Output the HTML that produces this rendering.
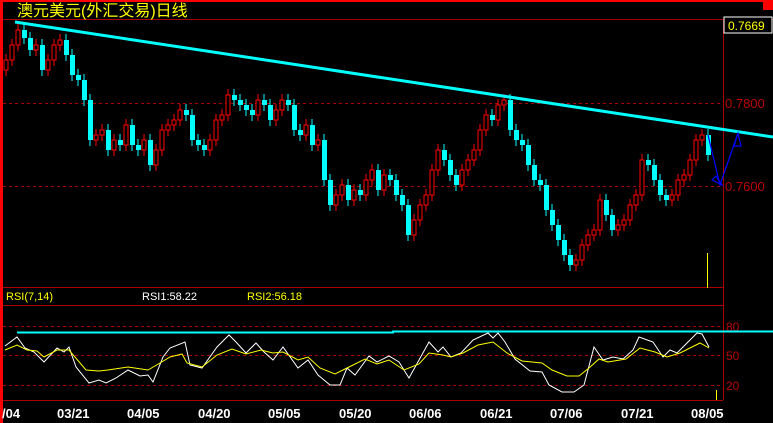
<!DOCTYPE html>
<html><head><meta charset="utf-8"><style>
html,body{margin:0;padding:0;background:#000;width:773px;height:423px;overflow:hidden}
svg{display:block}
text{font-family:"Liberation Sans","Noto Sans CJK SC",sans-serif}
</style></head><body>
<svg width="773" height="423" viewBox="0 0 773 423" shape-rendering="crispEdges">
<rect width="773" height="423" fill="#000"/>
<rect x="0" y="0" width="773" height="2" fill="#f00"/>
<rect x="0" y="0" width="3" height="423" fill="#f00"/>
<rect x="763" y="0" width="10" height="10" fill="#f00"/>
<line x1="3" y1="19.5" x2="773" y2="19.5" stroke="#a00"/>
<line x1="723.5" y1="19" x2="723.5" y2="400" stroke="#a00"/>
<line x1="3" y1="287.5" x2="723" y2="287.5" stroke="#a00"/>
<line x1="3" y1="305.5" x2="723" y2="305.5" stroke="#a00"/>
<line x1="3" y1="400.5" x2="723" y2="400.5" stroke="#a00"/>
<g stroke="#a00" stroke-dasharray="3,3">
<line x1="3" y1="103.5" x2="723" y2="103.5"/>
<line x1="3" y1="186.5" x2="723" y2="186.5"/>
<line x1="3" y1="326.5" x2="723" y2="326.5"/>
<line x1="3" y1="355.5" x2="723" y2="355.5"/>
<line x1="3" y1="385.5" x2="723" y2="385.5"/>
</g>
<text x="17" y="16" font-size="16" fill="#ff0">澳元美元(外汇交易)日线</text>
<rect x="724" y="17" width="48" height="16" fill="#000" stroke="#fff"/>
<text x="728" y="30" font-size="12" fill="#ff0">0.7669</text>
<text x="725" y="108" font-size="13" fill="#b00">0.7800</text>
<text x="725" y="191" font-size="13" fill="#b00">0.7600</text>
<text x="726" y="331" font-size="12" fill="#b00">80</text>
<text x="726" y="360" font-size="12" fill="#b00">50</text>
<text x="726" y="390" font-size="12" fill="#b00">20</text>
<path fill="none" stroke="#0ff" d="M24 24V44 M30 32V56 M42 39V76 M66 34V61 M72 49V81 M78 69V86 M84 74V106 M90 94V146 M108 124V156 M120 134V151 M132 119V151 M138 139V156 M150 134V171 M186 104V121 M192 109V146 M198 134V151 M204 139V156 M234 89V106 M240 94V111 M246 99V116 M252 104V121 M264 94V111 M270 99V126 M288 94V111 M294 99V136 M300 124V141 M312 119V151 M324 134V186 M330 174V211 M348 179V206 M360 184V201 M378 164V196 M390 169V186 M396 174V201 M402 189V211 M408 199V241 M444 144V166 M450 154V181 M456 169V191 M492 109V126 M510 94V136 M516 124V146 M522 134V151 M528 139V171 M534 159V186 M540 174V191 M546 179V216 M552 204V231 M558 219V246 M564 234V261 M570 249V271 M606 194V221 M612 209V236 M648 154V171 M654 159V186 M660 174V201 M666 189V206 M708 129V161"/>
<path fill="#0ff" d="M22 30h5v8h-5z M28 38h5v12h-5z M40 45h5v25h-5z M64 40h5v15h-5z M70 55h5v20h-5z M76 75h5v5h-5z M82 80h5v20h-5z M88 100h5v40h-5z M106 130h5v20h-5z M118 140h5v5h-5z M130 125h5v20h-5z M136 145h5v5h-5z M148 140h5v25h-5z M184 110h5v5h-5z M190 115h5v25h-5z M196 140h5v5h-5z M202 145h5v5h-5z M232 95h5v5h-5z M238 100h5v5h-5z M244 105h5v5h-5z M250 110h5v5h-5z M262 100h5v5h-5z M268 105h5v15h-5z M286 100h5v5h-5z M292 105h5v25h-5z M298 130h5v5h-5z M310 125h5v20h-5z M322 140h5v40h-5z M328 180h5v25h-5z M346 185h5v15h-5z M358 190h5v5h-5z M376 170h5v20h-5z M388 175h5v5h-5z M394 180h5v15h-5z M400 195h5v10h-5z M406 205h5v30h-5z M442 150h5v10h-5z M448 160h5v15h-5z M454 175h5v10h-5z M490 115h5v5h-5z M508 100h5v30h-5z M514 130h5v10h-5z M520 140h5v5h-5z M526 145h5v20h-5z M532 165h5v15h-5z M538 180h5v5h-5z M544 185h5v25h-5z M550 210h5v15h-5z M556 225h5v15h-5z M562 240h5v15h-5z M568 255h5v10h-5z M604 200h5v15h-5z M610 215h5v15h-5z M646 160h5v5h-5z M652 165h5v15h-5z M658 180h5v15h-5z M664 195h5v5h-5z M706 135h5v20h-5z"/>
<path fill="none" stroke="#f00" d="M6 54V76 M12 39V66 M18 24V51 M36 39V56 M48 54V76 M54 39V66 M60 34V51 M96 129V146 M102 124V141 M114 134V156 M126 119V151 M144 134V156 M156 144V171 M162 124V156 M168 119V136 M174 114V131 M180 104V126 M210 134V156 M216 114V146 M222 109V126 M228 89V121 M258 94V121 M276 104V126 M282 94V116 M306 119V141 M318 134V151 M336 189V211 M342 179V201 M354 184V206 M366 174V201 M372 164V186 M384 169V196 M414 214V241 M420 199V226 M426 189V211 M432 164V201 M438 144V176 M462 164V191 M468 154V176 M474 144V166 M480 124V156 M486 109V136 M498 99V126 M504 94V111 M576 254V271 M582 239V266 M588 229V251 M594 224V241 M600 194V236 M618 219V236 M624 214V231 M630 199V226 M636 189V211 M642 154V201 M672 189V206 M678 174V201 M684 169V186 M690 154V181 M696 134V166 M702 129V146"/>
<path fill="#000" stroke="#f00" d="M4 60h4v10h-4z M10 45h4v15h-4z M16 30h4v15h-4z M34 45h4v5h-4z M46 60h4v10h-4z M52 45h4v15h-4z M58 40h4v5h-4z M94 135h4v5h-4z M100 130h4v5h-4z M112 140h4v10h-4z M124 125h4v20h-4z M142 140h4v10h-4z M154 150h4v15h-4z M160 130h4v20h-4z M166 125h4v5h-4z M172 120h4v5h-4z M178 110h4v10h-4z M208 140h4v10h-4z M214 120h4v20h-4z M220 115h4v5h-4z M226 95h4v20h-4z M256 100h4v15h-4z M274 110h4v10h-4z M280 100h4v10h-4z M304 125h4v10h-4z M316 140h4v5h-4z M334 195h4v10h-4z M340 185h4v10h-4z M352 190h4v10h-4z M364 180h4v15h-4z M370 170h4v10h-4z M382 175h4v15h-4z M412 220h4v15h-4z M418 205h4v15h-4z M424 195h4v10h-4z M430 170h4v25h-4z M436 150h4v20h-4z M460 170h4v15h-4z M466 160h4v10h-4z M472 150h4v10h-4z M478 130h4v20h-4z M484 115h4v15h-4z M496 105h4v15h-4z M502 100h4v5h-4z M574 260h4v5h-4z M580 245h4v15h-4z M586 235h4v10h-4z M592 230h4v5h-4z M598 200h4v30h-4z M616 225h4v5h-4z M622 220h4v5h-4z M628 205h4v15h-4z M634 195h4v10h-4z M640 160h4v35h-4z M670 195h4v5h-4z M676 180h4v15h-4z M682 175h4v5h-4z M688 160h4v15h-4z M694 140h4v20h-4z M700 135h4v5h-4z"/>
<line x1="15" y1="22" x2="773" y2="137" stroke="#0ff" stroke-width="3" shape-rendering="auto"/>
<g shape-rendering="auto" stroke="#00f" fill="none" stroke-width="1.2">
<path d="M708 135L720 185L738 133"/>
<path d="M716 176L722 185L712 180Z M734 146L738 133L741 146Z"/>
</g>
<line x1="707.5" y1="253" x2="707.5" y2="288" stroke="#ff0"/>
<line x1="716.5" y1="390" x2="716.5" y2="400" stroke="#ff0"/>
<text x="6" y="300" font-size="11" fill="#ff0">RSI(7,14)</text>
<text x="142" y="300" font-size="11" fill="#fff">RSI1:58.22</text>
<text x="247" y="300" font-size="11" fill="#ff0">RSI2:56.18</text>
<path d="M17 332.5H393V331.5H773" stroke="#0ff" stroke-width="2" fill="none"/>
<g fill="none" stroke-width="1" shape-rendering="auto">
<polyline stroke="#fff" points="5,346 17,337 25,348 34,352 44,362 57,348 64,352 69,347 76,367 89,383 99,380 106,383 116,378 128,370 140,376 148,375 153,382 163,357 170,348 185,342 190,365 202,368 217,347 229,335 236,342 246,353 256,343 264,352 273,360 283,347 298,368 308,360 318,375 330,385 340,385 347,368 355,375 369,356 377,362 389,356 399,362 409,378 419,360 429,342 438,352 443,347 451,357 461,353 473,340 488,333 493,338 498,333 505,342 515,359 530,371 542,372 549,385 562,392 574,392 584,385 594,347 603,360 613,357 623,359 633,350 639,337 653,342 663,357 670,350 677,353 687,343 697,333 702,334 709,347"/>
<polyline stroke="#ff0" points="5,350 17,345 27,350 37,351 44,357 57,350 69,350 86,370 99,371 108,370 128,367 148,370 160,363 170,357 182,354 187,363 202,367 217,355 232,349 246,354 261,350 273,353 283,352 298,360 308,357 320,368 335,374 345,369 365,359 377,364 389,360 404,370 419,364 429,353 443,355 451,357 463,353 478,345 493,342 507,353 522,361 542,363 552,370 567,376 579,376 589,368 599,359 608,362 626,359 640,348 655,352 667,357 680,353 700,343 709,348"/>
</g>
<g font-size="13" font-weight="bold" fill="#fff" style="font-family:'Liberation Mono',monospace">
<text x="2" y="418">/04</text>
<text x="57" y="418">03/21</text>
<text x="127" y="418">04/05</text>
<text x="198" y="418">04/20</text>
<text x="268" y="418">05/05</text>
<text x="339" y="418">05/20</text>
<text x="409" y="418">06/06</text>
<text x="480" y="418">06/21</text>
<text x="550" y="418">07/06</text>
<text x="621" y="418">07/21</text>
<text x="691" y="418">08/05</text>
</g>
</svg>
</body></html>
